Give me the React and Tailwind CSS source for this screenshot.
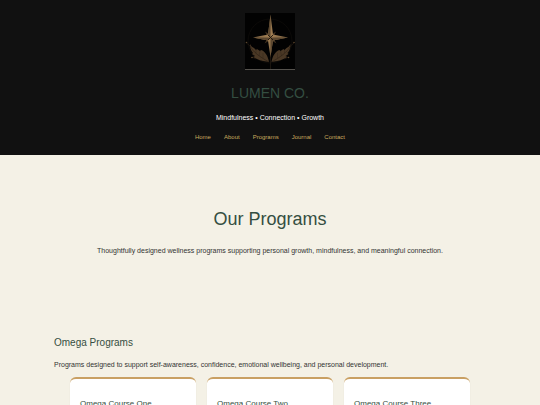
const NAV_LINKS = ['Home', 'About', 'Programs', 'Journal', 'Contact'];

const COURSES = ['Omega Course One', 'Omega Course Two', 'Omega Course Three'];

/**
 * Brand mark
 * - four long star points over four short ones, with a leaf on each side
 */
function Logo() {
  return (
    <svg viewBox="0 0 50 57" className="h-[57px] w-[50px]" role="img" aria-label="Lumen Co. logo">
      <defs>
        <linearGradient id="gold" x1="0" y1="0" x2="1" y2="1">
          <stop offset="0" stopColor="#57442c" />
          <stop offset="0.5" stopColor="#a17f54" />
          <stop offset="1" stopColor="#57442c" />
        </linearGradient>
        <g id="leaf">
          <path
            d="M24 49C23 43 20 38 16 37L15 38L12 36L11 37L9 35C7 34 6 33 5 31C5 35 6 38 8 40L7 41L10 43L8 44L12 46C16 48 20 48 24 49Z"
            fill="#4a3825"
          />
          <path d="M1.500 30L5 33C8 39 15 44 24 49M7 44L11 46" fill="none" stroke="#2a1f14" strokeWidth="0.6" />
          <path d="M11 40L11 37M14 43L15 38M18 45L18 40" stroke="#2f2418" strokeWidth="0.4" />
          <circle cx="1.500" cy="29.500" r="0.8" fill="#5a462d" />
          <circle cx="7" cy="44.500" r="0.8" fill="#5a462d" />
        </g>
      </defs>
      <rect width="50" height="57" fill="#020202" />
      <circle cx="25" cy="28" r="22" fill="none" stroke="#100d0a" strokeWidth="0.7" />
      <use href="#leaf" />
      <use href="#leaf" transform="translate(50.500 0) scale(-1 1)" />
      <path d="M25.500 43V56" stroke="#2c2218" strokeWidth="0.6" />
      {/* short diagonal points */}
      <path
        d="M20 18.500L25.500 22L31 18.500L28 24.500L31.500 30.500L25.500 27L19.500 30.500L23 24.500Z"
        fill="#403120"
      />
      {/* long points, split into a light and a dark facet */}
      <path
        d="M25.500 1.500L28 21.500L43 24.500L28 27.500L25.500 44L23 27.500L8 24.500L23 21.500Z"
        fill="url(#gold)"
      />
      <path
        d="M25.500 1.500V24.500L23 21.500ZM43 24.500H25.500L28 27.500ZM25.500 44V24.500L28 27.500ZM8 24.500H25.500L23 27.500Z"
        fill="#5a462f"
      />
      <path d="M23 22L28 27M28 22L23 27" stroke="#1c140c" strokeWidth="0.9" />
      <path d="M0 56.500H50" stroke="#55524d" strokeWidth="1" />
    </svg>
  );
}

function CourseCard({ title }) {
  return (
    <article className="rounded-md border-t-2 border-[#c9a063] bg-white px-[10px] pt-[19px] pb-10 shadow-xs">
      <h3 className="text-[8px] leading-3 text-[#344e41]">{title}</h3>
    </article>
  );
}

export default function App() {
  return (
    <div className="min-h-screen bg-[#f4f1e6] font-['Liberation_Sans',Arial,sans-serif] text-[7px] leading-3 text-[#333333]">
      <header className="flex flex-col items-center bg-[#111111] pt-[13px] pb-3 text-center">
        <Logo />
        <h1 className="mt-[13px] text-[14px] leading-5 text-[#344e41]">LUMEN CO.</h1>
        <p className="mt-[9px] text-white">Mindfulness • Connection • Growth</p>
        <nav className="mt-[7px] flex justify-center gap-[13px] text-[6px] text-[#c9a95f]">
          {NAV_LINKS.map((label) => (
            <a key={label} href={`#${label.toLowerCase()}`}>
              {label}
            </a>
          ))}
        </nav>
      </header>

      <main>
        <section className="px-[10%] pt-[52px] pb-20 text-center">
          <h2 className="text-[18px] leading-6 text-[#344e41]">Our Programs</h2>
          <p className="mt-[14px]">
            Thoughtfully designed wellness programs supporting personal growth, mindfulness, and
            meaningful connection.
          </p>
        </section>

        <section className="px-[10%]">
          <h2 className="text-[10px] leading-3 text-[#344e41]">Omega Programs</h2>
          <p className="mt-[10px]">
            Programs designed to support self-awareness, confidence, emotional wellbeing, and
            personal development.
          </p>
          <div className="mx-auto mt-[6px] grid max-w-[400px] grid-cols-3 gap-[11px]">
            {COURSES.map((title) => (
              <CourseCard key={title} title={title} />
            ))}
          </div>
        </section>
      </main>
    </div>
  );
}
